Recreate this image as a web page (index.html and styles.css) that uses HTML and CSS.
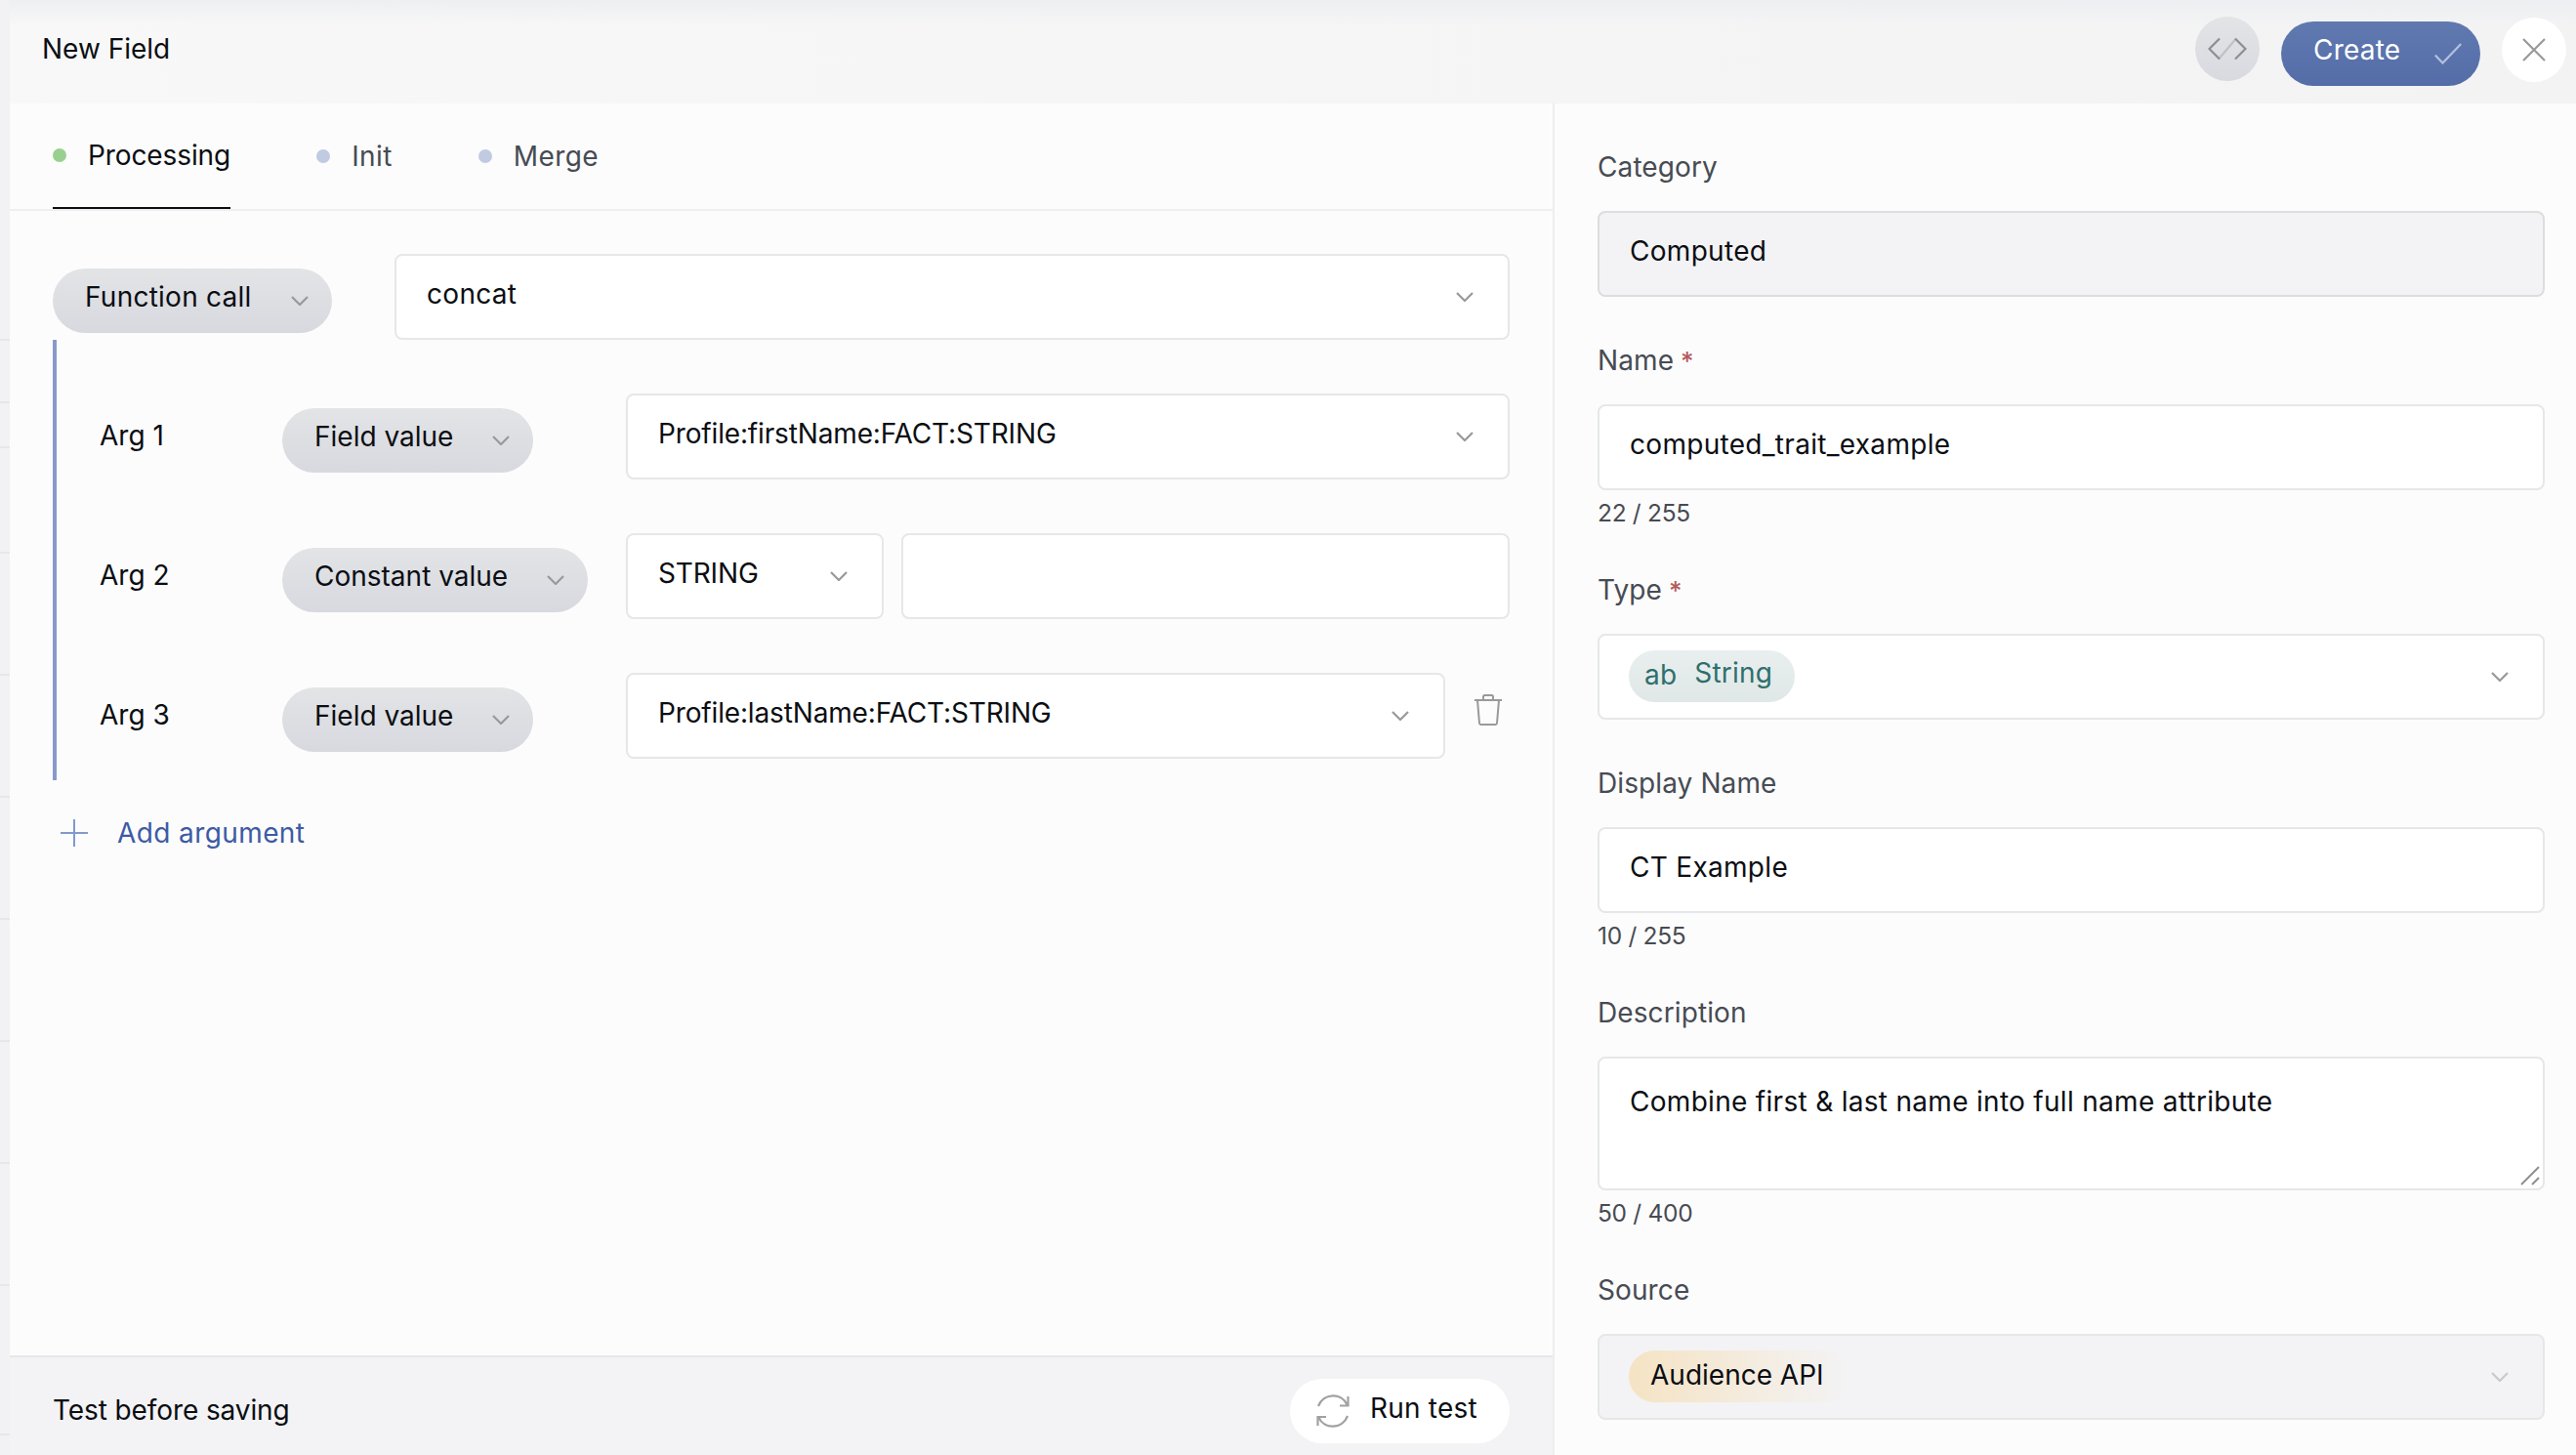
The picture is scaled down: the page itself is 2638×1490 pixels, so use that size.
FILE: index.html
```
<!DOCTYPE html>
<html lang="en">
<head>
    <meta charset="UTF-8">
    <meta name="viewport" content="width=device-width, initial-scale=1.0">
    <title>New Field</title>
    <link rel="stylesheet" href="styles.css">
</head>
<body>
    <div class="page-edge">
        <span></span><span></span><span></span><span></span><span></span><span></span>
        <span></span><span></span><span></span><span></span><span></span>
    </div>

    <div class="modal">
        <header>
            <h1>New Field</h1>
            <button class="round-btn code-btn" aria-label="Show code">
                <svg width="40" height="24" viewBox="0 0 40 24" fill="none" stroke-width="2.2">
                    <path d="M11.5 22 28.5 2" stroke="#bfc1c4"/>
                    <path d="M12 1.5 1.5 12 12 22.5M28 1.5 38.5 12 28 22.5" stroke="#8c8e91"/>
                </svg>
            </button>
            <button class="create-btn">
                <span>Create</span>
                <svg width="28" height="22" viewBox="0 0 28 22" fill="none" stroke="#b4c0dd" stroke-width="2.2">
                    <path d="M.8 12.5 8.5 20.5 27.2 1"/>
                </svg>
            </button>
            <button class="round-btn close-btn" aria-label="Close">
                <svg width="24" height="24" viewBox="0 0 24 24" fill="none" stroke="#98999b" stroke-width="2.2">
                    <path d="M1 1 23 23M23 1 1 23"/>
                </svg>
            </button>
        </header>

        <div class="content">
            <main>
                <nav>
                    <a class="tab active"><i></i>Processing</a>
                    <a class="tab"><i></i>Init</a>
                    <a class="tab"><i></i>Merge</a>
                </nav>

                <section class="builder">
                    <div class="call-row">
                        <button class="pill"><span>Function call</span><svg class="chevron" viewBox="0 0 18 10"><path d="M1 1 9 9 17 1"/></svg></button>
                        <div class="box grow"><span>concat</span><svg class="chevron" viewBox="0 0 18 10"><path d="M1 1 9 9 17 1"/></svg></div>
                    </div>

                    <div class="args">
                        <div class="arg-row">
                            <label>Arg 1</label>
                            <div class="kind"><button class="pill"><span>Field value</span><svg class="chevron" viewBox="0 0 18 10"><path d="M1 1 9 9 17 1"/></svg></button></div>
                            <div class="box grow"><span class="path">Profile:firstName:FACT:STRING</span><svg class="chevron" viewBox="0 0 18 10"><path d="M1 1 9 9 17 1"/></svg></div>
                        </div>
                        <div class="arg-row">
                            <label>Arg 2</label>
                            <div class="kind"><button class="pill"><span>Constant value</span><svg class="chevron" viewBox="0 0 18 10"><path d="M1 1 9 9 17 1"/></svg></button></div>
                            <div class="box const-type"><span class="path">STRING</span><svg class="chevron" viewBox="0 0 18 10"><path d="M1 1 9 9 17 1"/></svg></div>
                            <div class="box grow"></div>
                        </div>
                        <div class="arg-row">
                            <label>Arg 3</label>
                            <div class="kind"><button class="pill"><span>Field value</span><svg class="chevron" viewBox="0 0 18 10"><path d="M1 1 9 9 17 1"/></svg></button></div>
                            <div class="box grow"><span class="path">Profile:lastName:FACT:STRING</span><svg class="chevron" viewBox="0 0 18 10"><path d="M1 1 9 9 17 1"/></svg></div>
                            <svg class="trash" width="30" height="32" viewBox="0 0 30 32" fill="none" stroke="#98999b" stroke-width="2">
                                <path d="M1 6H29M10 6V2.5Q10 1 11.5 1H18.5Q20 1 20 2.5V6M4 6 6 29.5Q6.100 31 7.500 31H22.500Q23.900 31 24 29.500L26 6"/>
                            </svg>
                        </div>
                    </div>

                    <a class="add-arg">
                        <svg width="28" height="28" viewBox="0 0 28 28" stroke="#8299cc" stroke-width="2"><path d="M14 0V28M0 14H28"/></svg>
                        Add argument
                    </a>
                </section>

                <footer>
                    <span>Test before saving</span>
                    <button class="run-btn">
                        <svg width="34" height="34" viewBox="0 0 34 34" fill="none" stroke="#a0a1a3" stroke-width="2.2">
                            <path d="M2 12C7-1.5 26-2.5 31.5 10.5M32.5 2V11.5H24"/>
                            <path d="M32 22C27 35.5 8 36.5 2.5 23.5M1.5 32V23H10"/>
                        </svg>
                        <span>Run test</span>
                    </button>
                </footer>
            </main>

            <aside>
                <div class="field">
                    <label>Category</label>
                    <div class="box disabled dark"><span>Computed</span></div>
                </div>
                <div class="field">
                    <label>Name <b>*</b></label>
                    <div class="box"><span>computed_trait_example</span></div>
                    <small>22 / 255</small>
                </div>
                <div class="field">
                    <label>Type <b>*</b></label>
                    <div class="box">
                        <div class="tag string-tag"><em>ab</em><span>String</span></div>
                        <svg class="chevron" viewBox="0 0 18 10"><path d="M1 1 9 9 17 1"/></svg>
                    </div>
                </div>
                <div class="field">
                    <label>Display Name</label>
                    <div class="box"><span>CT Example</span></div>
                    <small>10 / 255</small>
                </div>
                <div class="field">
                    <label>Description</label>
                    <div class="box area">
                        <span>Combine first &amp; last name into full name attribute</span>
                        <svg class="resizer" width="20" height="20" viewBox="0 0 20 20" stroke="#8f9092" stroke-width="2"><path d="M1 19 19 1M12 19 19 12"/></svg>
                    </div>
                    <small>50 / 400</small>
                </div>
                <div class="field">
                    <label>Source</label>
                    <div class="box disabled">
                        <div class="tag source-tag"><span>Audience API</span></div>
                        <svg class="chevron" viewBox="0 0 18 10"><path d="M1 1 9 9 17 1"/></svg>
                    </div>
                </div>
            </aside>
        </div>
    </div>
</body>
</html>
```
FILE: styles.css
```
* {
    box-sizing: border-box;
}

body {
    margin: 0;
    width: 2638px;
    height: 1490px;
    overflow: hidden;
    display: flex;
    background-color: #f2f2f4;
    color: #0b0e13;
    font-family: Inter, "Liberation Sans", sans-serif;
    font-size: 28px;
    line-height: 34px;
}

h1,
button {
    margin: 0;
    border: 0;
    padding: 0;
    font: inherit;
    color: inherit;
}

svg {
    display: block;
    flex-shrink: 0;
}

/* strip of the page behind the modal */
.page-edge {
    width: 10px;
    padding-top: 347px;
}

.page-edge span {
    display: block;
    height: 2px;
    margin-bottom: 123px;
    background-color: #e7e7ea;
}

.page-edge span:nth-child(1) {
    margin-bottom: 62px;
}

.page-edge span:nth-child(2) {
    margin-bottom: 44px;
}

.page-edge span:nth-child(3) {
    margin-bottom: 106px;
}

.page-edge span:nth-child(10) {
    margin-bottom: 151px;
}

.modal {
    flex: 1;
    display: flex;
    flex-direction: column;
    background-color: #fcfcfc;
}

header {
    height: 106px;
    flex-shrink: 0;
    display: flex;
    align-items: flex-start;
    padding: 17px 10px 0 33px;
    background: linear-gradient(rgba(236, 238, 241, 0.9), rgba(240, 241, 243, 0) 26px), linear-gradient(90deg, #f8f8f8, #f3f3f4);
}

h1 {
    flex: 1;
    padding-top: 16px;
}

.round-btn {
    width: 66px;
    height: 66px;
    border-radius: 50%;
    display: flex;
    align-items: center;
    justify-content: center;
}

.code-btn {
    background: linear-gradient(#e2e4e6, #d9dae0);
}

.close-btn {
    margin: 1px 0 0 22px;
    background-color: #fff;
}

.create-btn {
    width: 204px;
    height: 66px;
    margin: 5px 0 0 22px;
    padding: 0 19px 0 33px;
    border-radius: 33px;
    display: flex;
    align-items: center;
    justify-content: space-between;
    background: linear-gradient(#6079b0, #546da8);
    color: #fff;
    letter-spacing: 0.2px;
}

.create-btn span {
    padding-bottom: 8px;
}

.content {
    flex: 1;
    display: flex;
}

main {
    width: 1582px;
    display: flex;
    flex-direction: column;
    border-right: 2px solid #eeeeef;
}

nav {
    height: 110px;
    display: flex;
    gap: 88px;
    padding-left: 44px;
    border-bottom: 2px solid #eeeff0;
}

.tab {
    height: 108px;
    display: flex;
    align-items: center;
    color: #474b53;
    letter-spacing: 0.4px;
}

.tab i {
    width: 14px;
    height: 14px;
    margin-right: 22px;
    border-radius: 50%;
    background-color: #c0cae0;
}

.tab.active {
    border-bottom: 2px solid #0b0e13;
    color: #0b0e13;
    letter-spacing: -0.1px;
}

.tab.active i {
    background-color: #9ad08f;
}

.builder {
    flex: 1;
    padding: 44px 44px 0;
}

.call-row {
    display: flex;
    justify-content: space-between;
}

.call-row .box {
    max-width: 1142px;
}

.pill {
    height: 66px;
    margin-top: 15px;
    padding: 0 24px 0 33px;
    border-radius: 33px;
    display: flex;
    align-items: center;
    gap: 40px;
    background: linear-gradient(#e2e4e6, #d8d9df);
    letter-spacing: 0;
}

.call-row .pill {
    letter-spacing: 0.25px;
}

.pill span {
    padding-bottom: 8px;
}

.chevron {
    width: 18px;
    height: 10px;
    margin-bottom: 1px;
    fill: none;
    stroke: #98999b;
    stroke-width: 2.2;
}

.box {
    height: 88px;
    padding: 0 35px 0 31px;
    border: 2px solid #e6e7e8;
    border-radius: 8px;
    display: flex;
    align-items: center;
    justify-content: space-between;
    background-color: #fff;
}

.box > span {
    padding-bottom: 6px;
    letter-spacing: 0.3px;
}

.box > .path {
    letter-spacing: -0.15px;
}

.grow {
    flex: 1;
}

.args {
    padding: 55px 0 22px 44px;
    border-left: 4px solid #879bc9;
    display: flex;
    flex-direction: column;
    gap: 55px;
}

.arg-row {
    display: flex;
}

.arg-row label {
    width: 187px;
    padding-top: 26px;
}

.kind {
    width: 352px;
    display: flex;
    align-items: flex-start;
}

.const-type {
    width: 264px;
    margin-right: 18px;
}

.trash {
    margin: 22px 7px 0 29px;
}

.add-arg {
    display: flex;
    align-items: center;
    gap: 30px;
    padding: 37px 0 0 8px;
    color: #3c5ba5;
    letter-spacing: 0.4px;
}

footer {
    height: 102px;
    padding: 0 44px;
    border-top: 2px solid #e6e7e8;
    display: flex;
    justify-content: space-between;
    background-color: #f3f3f5;
}

footer > span {
    padding-top: 37px;
    letter-spacing: -0.1px;
}

.run-btn {
    width: 225px;
    height: 66px;
    margin-top: 22px;
    padding-left: 27px;
    border-radius: 33px;
    display: flex;
    align-items: center;
    gap: 21px;
    background-color: #fff;
    letter-spacing: 0.2px;
}

.run-btn span {
    padding-bottom: 6px;
}

aside {
    flex: 1;
    padding: 48px 32px 0 44px;
}

.field {
    margin-bottom: 48px;
}

.field:last-child {
    margin-bottom: 0;
}

.field label {
    display: block;
    margin-bottom: 28px;
    color: #474b53;
    letter-spacing: 0.1px;
}

.field b {
    margin-left: -1px;
    color: #b4595c;
    font-size: 26px;
    font-weight: 500;
    line-height: 1;
}

.field small {
    display: block;
    padding-top: 9px;
    font-size: 24.5px;
    line-height: 28px;
    letter-spacing: -0.3px;
    color: #474b53;
}

.disabled {
    background-color: #f3f3f5;
}

.disabled.dark {
    border-color: #dcddde;
}

.disabled .chevron {
    stroke: #c8c9cb;
}

.area {
    position: relative;
    height: 137px;
    align-items: flex-start;
    padding-top: 27px;
}

.resizer {
    position: absolute;
    right: 3px;
    bottom: 3px;
}

.tag {
    height: 53px;
    margin: 0 0 1px -1px;
    border-radius: 27px;
    display: flex;
    align-items: center;
}

.string-tag {
    padding: 0 23px 0 16px;
    gap: 18px;
    background: linear-gradient(#e9efef, #e0e7e7);
    color: #2f6f6c;
    letter-spacing: 0.2px;
}

.string-tag em {
    font-style: normal;
    padding-bottom: 3px;
}

.string-tag span {
    padding-bottom: 7px;
}

.source-tag {
    width: 226px;
    padding-left: 22px;
    background: linear-gradient(90deg, #f5e3c4, #f4ecdf 55%, #f3f3f5);
}

.source-tag span {
    padding-bottom: 4px;
}
```
